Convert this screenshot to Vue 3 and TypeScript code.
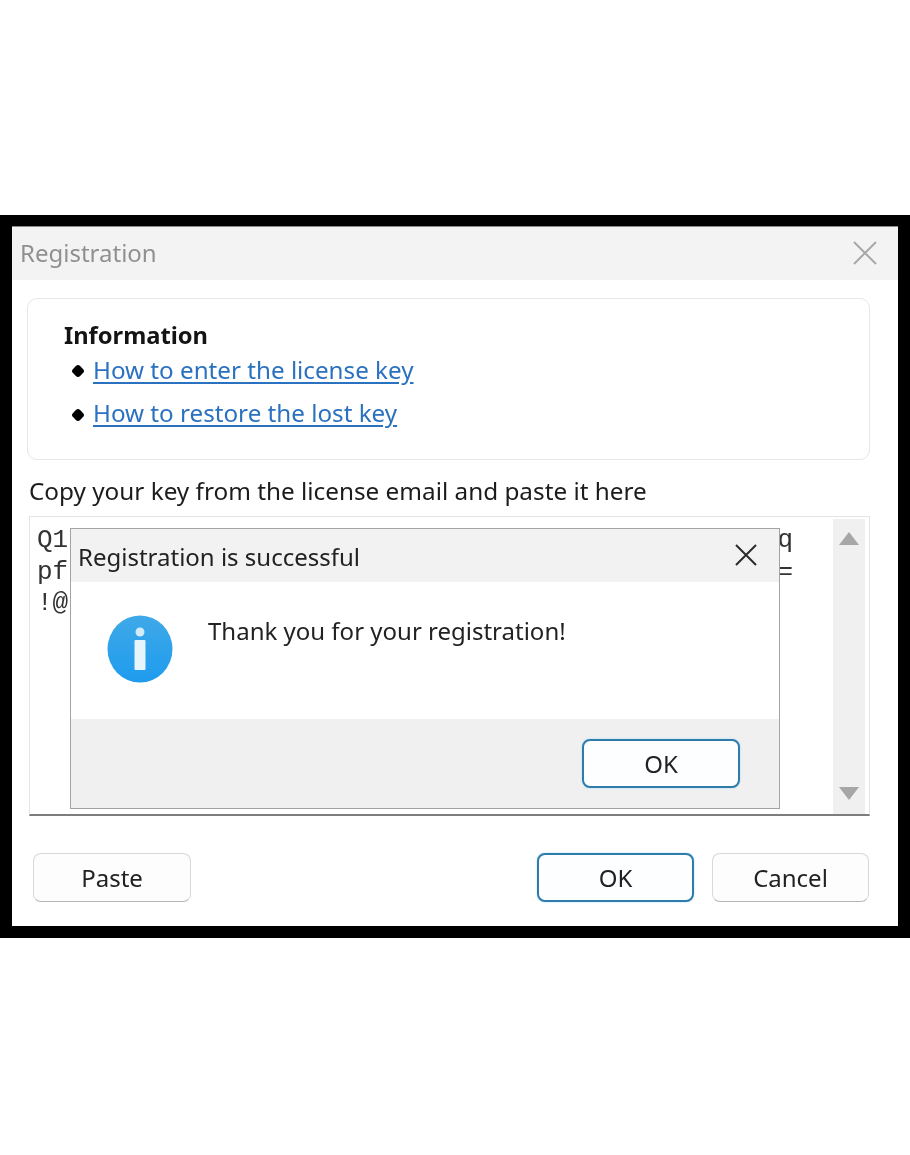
<script setup lang="ts">
const links: string[] = ['How to enter the license key', 'How to restore the lost key']
const keyLines = [
  { left: 'Q1l', right: 'q' },
  { left: 'pfi', right: '=' },
  { left: '!@', right: '' },
]
</script>

<template>
  <div class="page">
    <div class="frame">
      <div class="window">
        <div class="titlebar">
          <span class="title">Registration</span>
          <svg class="close" width="26" height="26" viewBox="0 0 26 26">
            <path d="M2 2 L24 24 M24 2 L2 24" stroke="#a8a8a8" stroke-width="2" fill="none" />
          </svg>
        </div>
        <div class="content">
          <div class="info">
            <div class="info-title">Information</div>
            <ul class="links">
              <li v-for="l in links" :key="l">
                <i class="bullet"></i>
                <a href="#" @click.prevent>{{ l }}</a>
              </li>
            </ul>
          </div>
          <div class="label">Copy your key from the license email and paste it here</div>
          <div class="keybox">
            <div class="keytext">
              <div v-for="k in keyLines" :key="k.left" class="keyline">
                <span>{{ k.left }}</span>
                <span>{{ k.right }}</span>
              </div>
            </div>
            <div class="scroll">
              <i class="arrow up"></i>
              <i class="arrow down"></i>
            </div>
            <div class="dialog">
              <div class="dialog-head">
                <span>Registration is successful</span>
                <svg width="24" height="24" viewBox="0 0 24 24">
                  <path d="M2 2 L22 22 M22 2 L2 22" stroke="#2b2b2b" stroke-width="2" fill="none" />
                </svg>
              </div>
              <div class="dialog-body">
                <svg class="info-icon" width="66" height="68" viewBox="0 0 66 68">
                  <defs>
                    <linearGradient id="blue" x1="0" y1="0" x2="0" y2="1">
                      <stop offset="0" stop-color="#3fa9e8" />
                      <stop offset="1" stop-color="#1e9bee" />
                    </linearGradient>
                  </defs>
                  <ellipse cx="33" cy="34" rx="32.5" ry="33.5" fill="url(#blue)" />
                  <circle cx="33" cy="17" r="4.5" fill="#d4ecfa" />
                  <rect x="27.5" y="25" width="11" height="30" rx="1" fill="#e6f4fc" />
                </svg>
                <span class="thanks">Thank you for your registration!</span>
              </div>
              <div class="dialog-foot">
                <button class="btn primary">OK</button>
              </div>
            </div>
          </div>
          <div class="actions">
            <button class="btn paste">Paste</button>
            <div class="right">
              <button class="btn primary ok">OK</button>
              <button class="btn cancel">Cancel</button>
            </div>
          </div>
        </div>
      </div>
    </div>
  </div>
</template>

<style>
html,
body {
  margin: 0;
  background: #fff;
}
</style>

<style scoped>
.page {
  width: 910px;
  height: 1155px;
  padding-top: 215px;
  box-sizing: border-box;
  background: #fff;
  font-family: "Noto Sans", "Open Sans", sans-serif;
  color: #1c1c1c;
  overflow: hidden;
}

.frame {
  background: #000;
  padding: 11px 12px 12px;
  height: 723px;
  box-sizing: border-box;
  filter: blur(0.5px);
}

.window {
  background: #fff;
  height: 700px;
  border-top: 1px solid #8a8a8a;
  box-sizing: border-box;
}

.titlebar {
  height: 53px;
  background: #f3f3f3;
  display: flex;
  align-items: center;
  justify-content: space-between;
  padding: 0 20px 2px 8px;
  box-sizing: border-box;
}

.title {
  font-size: 24px;
  color: #909090;
}

.content {
  padding: 18px 28px 0 15px;
}

.info {
  height: 162px;
  box-sizing: border-box;
  border: 1px solid #e6e6e6;
  border-radius: 10px;
  padding: 20px 36px 0;
}

.info-title {
  font-size: 23.7px;
  font-weight: 700;
  line-height: 32px;
  color: #141414;
}

.links {
  list-style: none;
  margin: 0;
  padding: 0 0 0 9px;
}

.links li {
  display: flex;
  align-items: center;
  gap: 9px;
  height: 43px;
  margin-top: 4px;
  font-size: 24.2px;
}

.links li:first-child {
  height: 36px;
  margin-top: 0;
}

.bullet {
  width: 10px;
  height: 10px;
  border-radius: 3px;
  background: #000;
  margin-top: 4px;
  margin-right: 1px;
  transform: rotate(45deg);
}

.links a {
  color: #2a72c0;
  text-decoration: underline;
  text-underline-offset: 3px;
}

.label {
  font-size: 24.3px;
  line-height: 34px;
  margin: 14px 0 8px 2px;
}

.keybox {
  position: relative;
  margin-left: 2px;
  height: 300px;
  box-sizing: border-box;
  border: 1px solid #e4e4e4;
  border-bottom: 2px solid #7d7d7d;
  display: flex;
  justify-content: space-between;
}

.keytext {
  width: 756px;
  padding: 8px 0 0 7px;
  font-family: "Liberation Mono", monospace;
  font-size: 26px;
  line-height: 31.5px;
  color: #333;
}

.keyline {
  display: flex;
  justify-content: space-between;
  height: 31.5px;
}

.scroll {
  width: 32px;
  margin: 2px 4px 0 0;
  background: #f0f0f0;
  display: flex;
  flex-direction: column;
  justify-content: space-between;
  align-items: center;
  padding: 13px 0 14px;
  box-sizing: border-box;
}

.arrow {
  width: 0;
  height: 0;
  border-left: 10px solid transparent;
  border-right: 10px solid transparent;
}

.arrow.up {
  border-bottom: 13px solid #a6a6a6;
}

.arrow.down {
  border-top: 13px solid #a6a6a6;
}

.dialog {
  position: absolute;
  left: 40px;
  top: 11px;
  width: 710px;
  height: 281px;
  box-sizing: border-box;
  border: 1px solid #a3a3a3;
  background: #fff;
  display: flex;
  flex-direction: column;
}

.dialog-head {
  height: 53px;
  background: #f2f2f2;
  display: flex;
  align-items: center;
  justify-content: space-between;
  padding: 2px 21px 0 7px;
  box-sizing: border-box;
  font-size: 24px;
  color: #222;
}

.dialog-head svg {
  margin-top: -4px;
}

.dialog-body {
  flex: 1;
  display: flex;
  align-items: flex-start;
  padding: 33px 0 0 36px;
  gap: 35px;
}

.thanks {
  font-size: 24px;
  line-height: 34px;
  margin-top: -1px;
  color: #222;
}

.dialog-foot {
  height: 89px;
  background: #f0f0f0;
  display: flex;
  justify-content: flex-end;
  align-items: flex-start;
  padding: 20px 39px 0 0;
  box-sizing: border-box;
}

.btn {
  height: 49px;
  width: 158px;
  box-sizing: border-box;
  border: 1px solid #d8d8d8;
  border-bottom-color: #b5b5b5;
  border-radius: 8px;
  background: #fdfdfd;
  font-family: inherit;
  font-size: 24px;
  color: #222;
  padding: 0;
}

.btn.primary {
  border: 2px solid #2f7cab;
  background: #fcfeff;
  box-shadow: 0 0 2px #9ed8f5;
}

.actions {
  display: flex;
  justify-content: space-between;
  margin: 37px 1px 0 6px;
}

.right {
  display: flex;
  gap: 18px;
}

.ok {
  width: 157px;
}

.cancel {
  width: 157px;
}
</style>
